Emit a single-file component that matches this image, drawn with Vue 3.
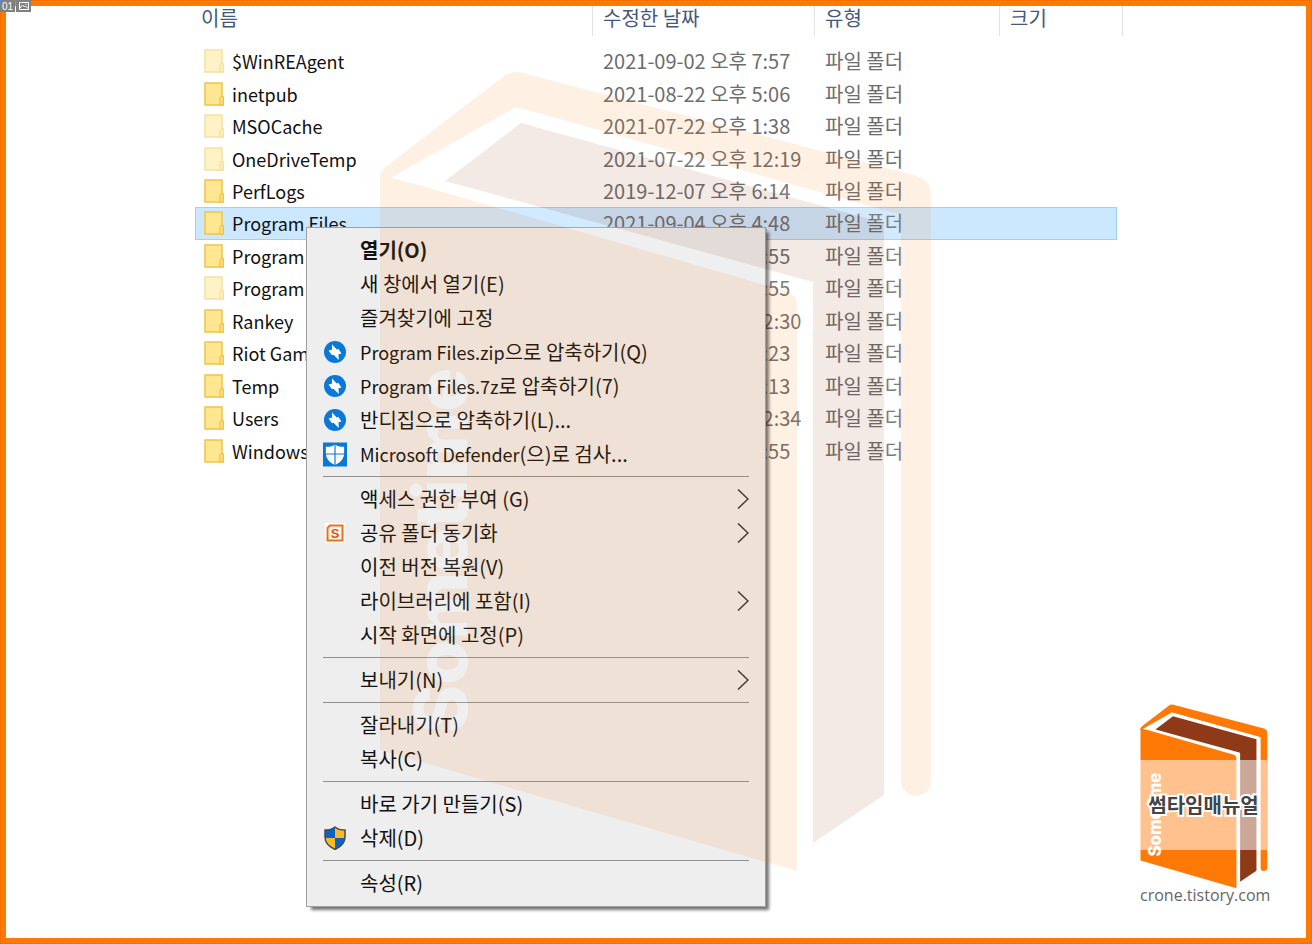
<script setup>
import { ref } from 'vue';

const columns = ['이름', '수정한 날짜', '유형', '크기'];

const folders = ref([
  { name: '$WinREAgent', date: '2021-09-02 오후 7:57', hidden: true },
  { name: 'inetpub', date: '2021-08-22 오후 5:06' },
  { name: 'MSOCache', date: '2021-07-22 오후 1:38', hidden: true },
  { name: 'OneDriveTemp', date: '2021-07-22 오후 12:19', hidden: true },
  { name: 'PerfLogs', date: '2019-12-07 오후 6:14' },
  { name: 'Program Files', date: '2021-09-04 오후 4:48' },
  { name: 'Program Files (x86)', date: '2021-09-04 오후 4:55' },
  { name: 'ProgramData', date: '2021-09-04 오후 4:55', hidden: true },
  { name: 'Rankey', date: '2021-08-22 오후 12:30' },
  { name: 'Riot Games', date: '2021-08-22 오후 5:23' },
  { name: 'Temp', date: '2021-08-30 오후 3:13' },
  { name: 'Users', date: '2021-08-22 오후 12:34' },
  { name: 'Windows', date: '2021-09-04 오후 4:55' },
]);
const selected = ref('Program Files');

// every inner list is one block of the menu, blocks are split by a line
const menuGroups = [
  [
    { label: '열기(O)', bold: true },
    { label: '새 창에서 열기(E)' },
    { label: '즐겨찾기에 고정' },
    { latin: 'Program Files.zip', label: '으로 압축하기(Q)', icon: 'zip' },
    { latin: 'Program Files.7z', label: '로 압축하기(7)', icon: 'zip' },
    { label: '반디집으로 압축하기(L)...', icon: 'zip' },
    { latin: 'Microsoft Defender', label: '(으)로 검사...', icon: 'defender' },
  ],
  [
    { label: '액세스 권한 부여 (G)', more: true },
    { label: '공유 폴더 동기화', icon: 'sync', more: true },
    { label: '이전 버전 복원(V)' },
    { label: '라이브러리에 포함(I)', more: true },
    { label: '시작 화면에 고정(P)' },
  ],
  [{ label: '보내기(N)', more: true }],
  [{ label: '잘라내기(T)' }, { label: '복사(C)' }],
  [{ label: '바로 가기 만들기(S)' }, { label: '삭제(D)', icon: 'shield' }],
  [{ label: '속성(R)' }],
];
</script>

<template>
  <div class="frame">
    <table class="files">
      <colgroup>
        <col />
        <col class="col-date" />
        <col class="col-type" />
        <col class="col-size" />
        <col class="col-gutter" />
      </colgroup>
      <thead>
        <tr>
          <th v-for="c in columns" :key="c" scope="col">{{ c }}</th>
          <td></td>
        </tr>
      </thead>
      <tbody>
        <tr v-for="f in folders" :key="f.name" :class="{ selected: f.name === selected }" @click="selected = f.name">
          <td>
            <div class="name">
              <svg class="folder" :class="{ faded: f.hidden }" viewBox="0 0 20 24">
                <path d="M1 1h17v14h1v8H1z" fill="#ffe691" stroke="#eec547" stroke-width="1.500" />
                <path d="M16 23.200v-7.200l1.200-1.500h2v8.700z" fill="#ffdf80" stroke="#e9bd3c" />
              </svg>
              <span>{{ f.name }}</span>
            </div>
          </td>
          <td>{{ f.date }}</td>
          <td>파일 폴더</td>
          <td class="last"></td>
          <td class="gutter"></td>
        </tr>
      </tbody>
    </table>

    <div class="menu" role="menu">
      <div v-for="(group, i) in menuGroups" :key="i" class="group">
        <button v-for="item in group" :key="item.label" type="button" role="menuitem" :class="{ bold: item.bold }">
          <span class="icon">
            <svg v-if="item.icon === 'zip'" width="22" height="22" viewBox="0 0 22 22">
              <circle cx="11" cy="11" r="11" fill="#0a78d7" />
              <path d="M8 3.200l4.700 5.200 1.500-.6 3.300 4.700-3 .7.300 5.800-5.300-5.300-1.500.5L4.500 9.600l3.400-.8z" fill="#fff" />
            </svg>
            <svg v-else-if="item.icon === 'defender'" width="25" height="25" viewBox="0 0 25 25">
              <path d="M0 0h25v25H0z" fill="#0a78d7" />
              <path d="M12.500 2c2.500 2 5.500 2.700 9.500 2.500V11c0 6-4 10-9.500 12.500C7 21 3 17 3 11V4.500C7 4.700 10 4 12.500 2z" fill="#fff" />
              <path d="M12.500 1v23M2 12h21" stroke="#0a78d7" stroke-width="1.200" />
            </svg>
            <svg v-else-if="item.icon === 'sync'" width="20" height="20" viewBox="0 0 20 20">
              <path d="M0 0h20v20H0z" fill="#fff" />
              <path d="M5 2.500h12.500v15h-15V5z" fill="#fff3e2" stroke="#e8731c" stroke-width="2" />
              <text x="10" y="15" text-anchor="middle" class="sync-letter">S</text>
            </svg>
            <svg v-else-if="item.icon === 'shield'" width="24" height="24" viewBox="0 0 24 24">
              <path d="M12 1c2.500 2 6 3 10 3v7c0 6-4.500 10-10 12.500C6.500 21 2 17 2 11V4c4 0 7.500-1 10-3z" fill="#fbb829" />
              <path d="M12 1v11H2V4c4 0 7.500-1 10-3zM12 12h10c-.5 5.500-4.500 9-10 11.500z" fill="#0a62c4" />
              <path d="M12 1c2.500 2 6 3 10 3v7c0 6-4.500 10-10 12.500C6.500 21 2 17 2 11V4c4 0 7.500-1 10-3z" fill="none" stroke="#4a4a4a" stroke-width="1.500" />
            </svg>
          </span>
          <span><span v-if="item.latin" class="latin">{{ item.latin }}</span>{{ item.label }}</span>
          <svg v-if="item.more" class="arrow" width="12" height="20" viewBox="0 0 12 20">
            <path d="M1 .5L11 10 1 19.500" fill="none" stroke="#333" stroke-width="1.500" />
          </svg>
        </button>
      </div>
    </div>

    <svg class="watermark" viewBox="378 70 556 804" aria-hidden="true">
      <defs>
        <g id="book">
          <path d="M392 162L504 76q9-6 19-3l394 103q14 5 14 20v585a15 15 0 0 1-30 0V215L516 107 380 184V178q0-9 12-16z" fill="#ff7906" />
          <path d="M516 107L901 215V796L797 871 415 184z" fill="#fff" />
          <path d="M521 123L884 223V795L813 843V282L445 181z" fill="#8e3a18" />
          <path d="M380 175L415 184 786 291q11 4 11 14V871L380 750z" fill="#ff7906" />
          <text class="spine" transform="translate(467 733) rotate(-90)">Sometime</text>
        </g>
      </defs>
      <use href="#book" />
    </svg>

    <div class="logo">
      <svg class="logo-book" viewBox="378 70 556 804" aria-hidden="true">
        <use href="#book" />
      </svg>
      <div class="logo-band"><span>썸타임매뉴얼</span></div>
      <a href="#">crone.tistory.com</a>
    </div>

    <div class="badges">
      <span>01</span>
      <span>
        <svg width="10" height="8" viewBox="0 0 10 8">
          <path d="M.5.500h9v7h-9zM1 6l2.500-3 2 2 1-1L9 6.500M6.500 2.500h1" fill="none" stroke="#fff" />
        </svg>
      </span>
    </div>
  </div>
</template>

<style>
body {
  margin: 0;
}
</style>

<style scoped>
.frame {
  position: relative;
  box-sizing: border-box;
  min-height: 100vh;
  padding: 0 183px 0 189px;
  border: 6px solid #ff7906;
  background: #fff;
  font-family: 'Noto Sans CJK KR', sans-serif;
  font-size: 20px;
}

.frame::after {
  content: '';
  position: absolute;
  inset: -6px;
  border: 1px dotted #4a86f0;
  pointer-events: none;
}

.files {
  width: 100%;
  height: 461px;
  border-spacing: 0;
  table-layout: fixed;
  color: #6d6d6d;
  line-height: 24px;
}

.col-date {
  width: 222px;
}

.col-type {
  width: 185px;
}

.col-size {
  width: 117px;
}

.col-gutter {
  width: 6px;
}

thead tr {
  height: 39px;
}

th,
thead td {
  padding: 0 0 15px 10px;
  background: linear-gradient(#e3e3e3, #e3e3e3) right top / 1px 30px no-repeat;
  color: #44597a;
  font-weight: 400;
  text-align: left;
}

th:first-child {
  padding-left: 6px;
}

th:nth-child(4) {
  background: none;
}

thead td {
  padding: 0;
}

tbody td {
  padding: 0 0 0 10px;
  border: solid transparent;
  border-width: 1px 0;
  white-space: nowrap;
}

tbody td:first-child {
  padding-left: 8px;
  border-left-width: 1px;
}

.name {
  display: flex;
  align-items: center;
  gap: 8px;
  color: #111;
  font-size: 18px;
}

.folder {
  width: 20px;
  height: 24px;
}

.faded {
  opacity: 0.5;
}

tbody .gutter {
  padding: 0;
}

.selected td:not(.gutter) {
  border-color: #99d1ff;
  background: #cce8ff;
}

.selected .last {
  border-right-width: 1px;
}

.menu {
  position: absolute;
  top: 221px;
  left: 300px;
  box-sizing: border-box;
  width: 460px;
  padding: 5px 16px 6px;
  border: 1px solid #a0a0a0;
  background: #eee;
  box-shadow: 4px 4px 3px -1px rgba(0, 0, 0, 0.55);
}

.group + .group {
  margin-top: 5px;
  padding-top: 5px;
  border-top: 1px solid #919191;
}

.menu button {
  display: flex;
  align-items: center;
  width: 100%;
  height: 34px;
  padding: 0;
  border: 0;
  background: none;
  color: #111;
  font: inherit;
  line-height: 24px;
  text-align: left;
}

.menu .bold {
  font-weight: 700;
}

.latin {
  font-size: 18px;
}

.icon {
  display: flex;
  justify-content: center;
  width: 24px;
  margin-right: 13px;
}

.sync-letter {
  fill: #d9541e;
  font: 700 13px 'Liberation Sans', sans-serif;
}

.arrow {
  margin-left: auto;
}

.watermark {
  position: absolute;
  top: 64px;
  left: 372px;
  width: 556px;
  height: 804px;
  opacity: 0.1;
  pointer-events: none;
}

.spine {
  fill: #fff;
  font: 800 73px Inter, sans-serif;
}

.logo {
  position: absolute;
  right: 34px;
  bottom: 37px;
  width: 132px;
}

.logo-book {
  display: block;
  width: 128px;
  height: 185px;
}

.logo-band {
  position: absolute;
  top: 56px;
  left: 0;
  display: flex;
  align-items: center;
  justify-content: center;
  width: 127px;
  height: 90px;
  background: rgba(255, 255, 255, 0.55);
  color: #444;
  font-weight: 700;
  line-height: 24px;
  white-space: nowrap;
  -webkit-text-stroke: 4px #fff;
  paint-order: stroke fill;
}

.logo a {
  display: block;
  color: #666;
  font: 16px/12px 'Open Sans', sans-serif;
  text-decoration: none;
}

.badges {
  position: absolute;
  top: -6px;
  left: -6px;
  display: flex;
  gap: 1px;
}

.badges span {
  display: flex;
  align-items: center;
  justify-content: center;
  width: 15px;
  height: 12px;
  background: #808080;
  color: #fff;
  font: 10px 'Liberation Sans', sans-serif;
}
</style>
